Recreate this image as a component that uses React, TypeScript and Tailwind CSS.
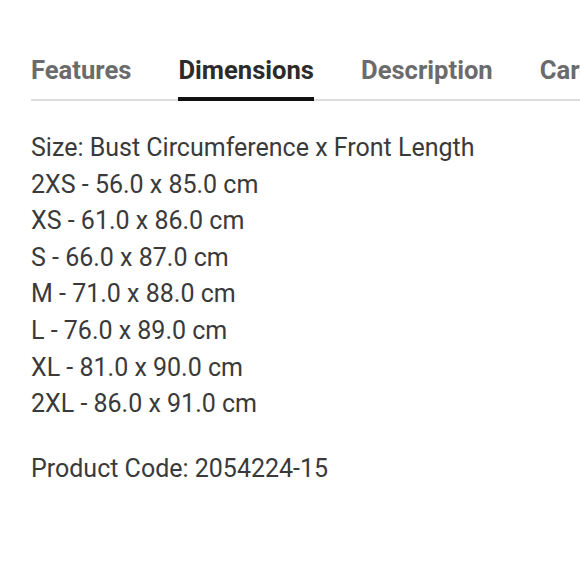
export default function App() {
  const rows = [
    "Size: Bust Circumference x Front Length",
    "2XS - 56.0 x 85.0 cm",
    "XS - 61.0 x 86.0 cm",
    "S - 66.0 x 87.0 cm",
    "M - 71.0 x 88.0 cm",
    "L - 76.0 x 89.0 cm",
    "XL - 81.0 x 90.0 cm",
    "2XL - 86.0 x 91.0 cm",
  ];
  const tabs = ["Features", "Dimensions", "Description", "Care"];
  return (
    <div className="w-[580px] h-[580px] bg-white overflow-hidden pl-[31px] pt-[54px]" style={{ fontFamily: "Roboto, sans-serif" }}>
      <div className="flex gap-[47px] border-b-2 border-[#dcdcdc] whitespace-nowrap">
        {tabs.map((t) => (
          <div
            key={t}
            className={
              "text-[25.6px] font-bold leading-[32px] pb-[11px] border-b-4 -mb-[2px] " +
              (t === "Dimensions" ? "text-[#2b2b2b] border-[#111]" : "text-[#6b6b6b] border-transparent")
            }
          >
            {t}
          </div>
        ))}
      </div>
      <div className="pt-[29px] text-[25px] leading-[36.6px] text-[#3a3a3a]">
        {rows.map((r) => (
          <div key={r}>{r}</div>
        ))}
        <div className="mt-[28px]">Product Code: 2054224-15</div>
      </div>
    </div>
  );
}
